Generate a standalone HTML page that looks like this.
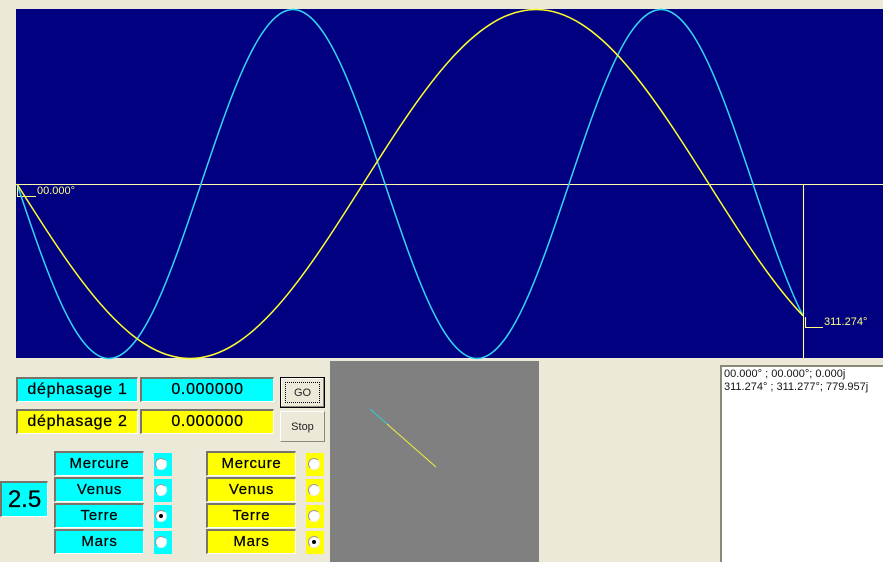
<!DOCTYPE html>
<html><head><meta charset="utf-8"><style>
html,body{margin:0;padding:0;background:#ECE9D8;width:883px;height:562px;overflow:hidden}
body{position:relative;font-family:"Liberation Sans",sans-serif;color:#000}
.a{position:absolute;box-sizing:border-box}
.l{position:absolute;box-sizing:border-box;text-align:center;border:1px solid;border-color:#77756a #fff #fff #77756a;border-width:2px 1px 1px 2px;font-size:16px;letter-spacing:.7px;white-space:nowrap;-webkit-text-stroke:.25px #000}
.c{background:#0ff}.y{background:#ff0}
.r{position:absolute;width:18px;height:23px}
.r i{position:absolute;left:1px;top:5px;width:12px;height:12px;border-radius:50%;background:#fff;box-sizing:border-box;border:1px solid #999;border-right-color:#eee;border-bottom-color:#eee}
.r.k i:after{content:"";position:absolute;left:3px;top:3px;width:4px;height:4px;border-radius:50%;background:#000}
.y.r i{left:2px}
.b{position:absolute;box-sizing:border-box;background:#ECE9D8;font-size:11px;text-align:center;color:#222}
</style></head><body>
<svg class="a" style="left:0;top:0" width="883" height="360" viewBox="0 0 883 360">
<rect x="16" y="9" width="867" height="349" fill="#000080"/>
<g fill="none">
<path d="M16 184.5H883M803.5 184V358" stroke="#ffffa8" stroke-width="1.1"/>
<path d="M17.5 184V196.5H36M805.5 317V327.5H823" stroke="#ffff80" stroke-width="1.1"/>
<path stroke="#35d4f4" stroke-width="1.5" d="M17 184C47 273.4 75.7 358.5 109 358.5C142.3 358.5 171 273.4 201 184C231 94.6 259.7 9.5 293 9.5C326.3 9.5 355 94.6 385 184C415 273.4 443.7 358.5 477 358.5C510.3 358.5 539 273.4 569 184C599 94.6 627.7 9.5 661 9.5C694.3 9.5 723 94.6 753 184C769.7 233.7 786.3 283.1 803 315.7"/>
<path stroke="#ffff30" stroke-width="1.5" d="M17 184C73.4 273.4 127.4 358.5 190 358.5C252.6 358.5 306.6 273.4 363 184C419.4 94.6 473.4 9.5 536 9.5C598.6 9.5 652.6 94.6 709 184C740.3 233.8 771.7 283 803 315.7"/>
</g>
<text x="37" y="194" font-family="Liberation Sans" font-size="11" fill="#ffff80">00.000°</text>
<text x="824" y="325" font-family="Liberation Sans" font-size="11" fill="#ffff80">311.274°</text>
</svg>

<div class="l c" style="left:16px;top:377px;width:122px;height:25px;line-height:22px">déphasage 1</div>
<div class="l c" style="left:140px;top:377px;width:134px;height:25px;line-height:21px">0.000000</div>
<div class="l y" style="left:16px;top:409px;width:122px;height:25px;line-height:22px">déphasage 2</div>
<div class="l y" style="left:140px;top:409px;width:134px;height:25px;line-height:21px">0.000000</div>

<div class="b" style="left:280px;top:377px;width:45px;height:31px;border:1px solid #000;box-shadow:inset -1px -1px #8a8878,inset 1px 1px #fff;line-height:30px">GO<div class="a" style="left:4px;top:4px;width:35px;height:21px;border:1px dotted #000"></div></div>
<div class="b" style="left:280px;top:411px;width:45px;height:31px;border:1px solid;border-color:#fff #8a8878 #8a8878 #fff;line-height:30px">Stop</div>

<div class="l c" style="left:0;top:481px;width:48px;height:36px;font-size:24px;letter-spacing:0;line-height:33px">2.5</div>

<div class="l c" style="left:54px;top:451px;width:90px;height:25px;line-height:22px;font-size:15px">Mercure</div>
<div class="l c" style="left:54px;top:477px;width:90px;height:25px;line-height:22px;font-size:15px">Venus</div>
<div class="l c" style="left:54px;top:503px;width:90px;height:25px;line-height:22px;font-size:15px">Terre</div>
<div class="l c" style="left:54px;top:529px;width:90px;height:25px;line-height:22px;font-size:15px">Mars</div>
<div class="r c" style="left:154px;top:453px"><i></i></div>
<div class="r c" style="left:154px;top:479px"><i></i></div>
<div class="r c k" style="left:154px;top:505px"><i></i></div>
<div class="r c" style="left:154px;top:531px"><i></i></div>

<div class="l y" style="left:206px;top:451px;width:90px;height:25px;line-height:22px;font-size:15px">Mercure</div>
<div class="l y" style="left:206px;top:477px;width:90px;height:25px;line-height:22px;font-size:15px">Venus</div>
<div class="l y" style="left:206px;top:503px;width:90px;height:25px;line-height:22px;font-size:15px">Terre</div>
<div class="l y" style="left:206px;top:529px;width:90px;height:25px;line-height:22px;font-size:15px">Mars</div>
<div class="r y" style="left:306px;top:453px"><i></i></div>
<div class="r y" style="left:306px;top:479px"><i></i></div>
<div class="r y" style="left:306px;top:505px"><i></i></div>
<div class="r y k" style="left:306px;top:531px"><i></i></div>

<svg class="a" style="left:330px;top:361px" width="209" height="201">
<rect width="209" height="201" fill="#808080"/>
<path d="M40 48L57 63" stroke="#30d0d0" fill="none"/>
<path d="M57 63L106 106" stroke="#f0f040" fill="none"/>
</svg>

<div class="a" style="left:720px;top:365px;width:163px;height:197px;background:#fff;border-left:2px solid #8a8878;border-top:2px solid #8a8878;padding:1px 0 0 2px;font-size:11px;line-height:13px;white-space:nowrap;color:#111">00.000° ; 00.000°; 0.000j<br>311.274° ; 311.277°; 779.957j</div>
</body></html>
